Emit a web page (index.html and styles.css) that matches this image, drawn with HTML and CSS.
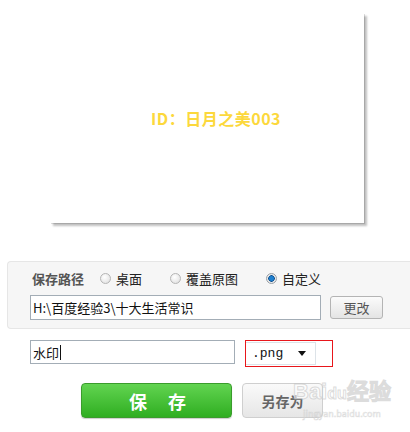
FILE: index.html
```html
<!DOCTYPE html>
<html lang="zh-CN">
<head>
  <meta charset="UTF-8" />
  <meta name="viewport" content="width=device-width, initial-scale=1" />
  <title>保存图片</title>
  <link rel="stylesheet" href="styles.css">
</head>
<body>
  <!-- Preview -->
  <div class="preview">
    <div class="preview-card">
      <p class="watermark-text">ID：日月之美003</p>
    </div>
  </div>

  <!-- Save path panel -->
  <section class="save-panel">
    <div class="path-options">
      <span class="path-label">保存路径</span>
      <label class="radio"><span class="dot"></span>桌面</label>
      <label class="radio"><span class="dot"></span>覆盖原图</label>
      <label class="radio"><span class="dot checked"></span>自定义</label>
    </div>
    <div class="path-row">
      <div class="path-input">H:\百度经验3\十大生活常识</div>
      <button class="btn-change">更改</button>
    </div>
  </section>

  <!-- File name -->
  <div class="name-row">
    <div class="name-input">水印<span class="caret"></span></div>
    <div class="format-box">
      <div class="format-select">
        <span>.png</span>
        <span class="arrow"></span>
      </div>
    </div>
  </div>

  <!-- Actions -->
  <div class="actions">
    <button class="btn-save"><span>保</span><span>存</span></button>
    <button class="btn-saveas">另存为</button>
    <div class="baidu-mark">
      <span class="mark-big">Bai<span class="paw">du</span>经验</span>
      <span class="mark-small">jingyan.baidu.com</span>
    </div>
  </div>
</body>
</html>
```

FILE: styles.css
```css
* {
  margin: 0;
  padding: 0;
  box-sizing: border-box;
}
body {
  width: 410px;
  height: 432px;
  background: #fff;
  font-family: "Noto Sans CJK SC", "Liberation Sans", sans-serif;
  font-size: 13px;
  color: #222;
  overflow: hidden;
}

/* Preview */
.preview {
  padding: 13px 0 0 50px;
}
.preview-card {
  width: 314px;
  height: 210px;
  background: #fff;
  box-shadow: 3px 3px 2px rgba(0, 0, 0, 0.25), 1px 1px 0 rgba(0, 0, 0, 0.12);
  display: flex;
  align-items: center;
  justify-content: center;
}
.watermark-text {
  color: #fcd83c;
  font-size: 16px;
  font-weight: 700;
  letter-spacing: 0.5px;
  margin: 0 0 0 18px;
}

/* Save panel */
.save-panel {
  margin: 38px 0 0 7px;
  height: 68px;
  background: #f6f6f6;
  border: 1px solid #e6e6e6;
  border-right: none;
  border-radius: 4px 0 0 4px;
  padding: 7px 0 0 22px;
}
.path-options {
  display: flex;
  align-items: center;
  height: 18px;
}
.path-label {
  font-weight: 700;
  color: #555;
  margin: 0 16px 0 2px;
}
.radio {
  display: flex;
  align-items: center;
  gap: 5px;
  margin-right: 28px;
}
.dot {
  width: 11px;
  height: 11px;
  border-radius: 50%;
  border: 1px solid #b5b5b5;
  background: radial-gradient(circle at 40% 35%, #fff, #dcdcdc);
}
.dot.checked {
  border-color: #9aa0a6;
  background: radial-gradient(circle, #1d7fcf 0 2px, #0d4f8f 3px, #e6e6e6 3.5px, #f4f4f4);
}
.path-row {
  display: flex;
  align-items: center;
  margin: 8px 0 0 0;
}
.path-input {
  width: 291px;
  height: 25px;
  background: #fff;
  border: 1px solid #a3adb6;
  padding: 0 2px;
  line-height: 23px;
  color: #111;
}
.btn-change {
  width: 53px;
  height: 23px;
  margin-left: 9px;
  border: 1px solid #b4b4b4;
  border-radius: 3px;
  background: linear-gradient(#fbfbfb, #e4e4e4);
  font-family: inherit;
  font-size: 13px;
  color: #555;
}

/* File name row */
.name-row {
  display: flex;
  align-items: flex-start;
  margin: 11px 0 0 30px;
}
.name-input {
  width: 205px;
  height: 24px;
  border: 1px solid #a3adb6;
  padding: 0 2px;
  font-size: 13px;
  color: #111;
  display: flex;
  align-items: center;
}
.caret {
  width: 1px;
  height: 15px;
  background: #111;
  margin-left: 1px;
}
.format-box {
  margin-left: 10px;
  width: 88px;
  height: 27px;
  border: 1px solid #e8161b;
  padding-top: 1px;
}
.format-select {
  width: 70px;
  height: 23px;
  border: 1px solid #dde3e8;
  border-left: none;
  background: #fff;
  display: flex;
  align-items: center;
  justify-content: space-between;
  padding: 0 9px 0 6px;
  font-family: "Liberation Mono", monospace;
  font-size: 13px;
  color: #111;
}
.arrow {
  width: 0;
  height: 0;
  border-left: 4px solid transparent;
  border-right: 4px solid transparent;
  border-top: 5px solid #111;
}

/* Actions */
.actions {
  position: relative;
  display: flex;
  margin: 16px 0 0 81px;
}
.btn-save {
  width: 151px;
  height: 35px;
  border: 1px solid #3a9c2c;
  border-radius: 4px;
  background: linear-gradient(#62d451, #2fae21);
  box-shadow: 0 1px 1px rgba(0, 0, 0, 0.2);
  font-family: inherit;
  font-size: 18px;
  font-weight: 700;
  color: #fff;
  display: flex;
  align-items: center;
  justify-content: center;
  gap: 21px;
  padding-left: 2px;
}
.btn-saveas {
  width: 81px;
  height: 35px;
  margin-left: 10px;
  border: 1px solid #cfcfcf;
  border-radius: 4px;
  background: linear-gradient(#fafafa, #e6e6e6);
  font-family: inherit;
  font-size: 14px;
  font-weight: 700;
  color: #666;
}
.baidu-mark {
  position: absolute;
  left: 212px;
  top: -6px;
  display: flex;
  flex-direction: column;
  align-items: center;
  pointer-events: none;
}
.mark-big {
  font-family: "Liberation Sans", sans-serif;
  font-size: 22px;
  font-weight: 700;
  line-height: 30px;
  color: rgba(255, 255, 255, 0.6);
  -webkit-text-stroke: 1px rgba(190, 190, 190, 0.55);
}
.mark-big .paw {
  font-size: 16px;
}
.mark-small {
  font-size: 9px;
  line-height: 10px;
  color: rgba(255, 255, 255, 0.5);
  -webkit-text-stroke: 0.6px rgba(190, 190, 190, 0.5);
}
```
